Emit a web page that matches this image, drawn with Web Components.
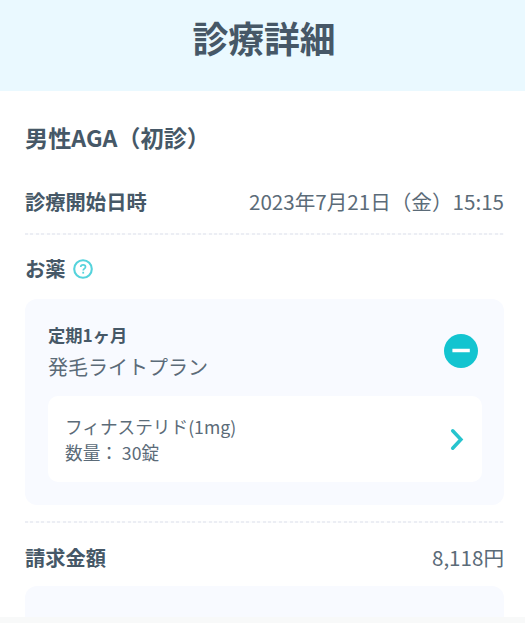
<!DOCTYPE html>
<html lang="ja">
<head>
<meta charset="utf-8">
<title>診療詳細</title>
<style>
  body {
    margin: 0;
    background: #fff;
    color: #465867;
    font-family: "Noto Sans CJK JP", sans-serif;
    overflow: hidden;
  }
</style>
</head>
<body>
<detail-page>
  <span slot="title">診療詳細</span>
  <span slot="course">男性AGA（初診）</span>
  <detail-row>
    <span slot="label">診療開始日時</span>
    2023年7月21日（金）15:15
  </detail-row>
  <dotted-line></dotted-line>
  <detail-row class="drug">
    <span slot="label">お薬</span>
    <help-icon slot="icon"></help-icon>
  </detail-row>
  <plan-card>
    <span slot="term">定期1ヶ月</span>
    <span slot="plan">発毛ライトプラン</span>
    <drug-item>
      <span slot="name">フィナステリド(1mg)</span>
      <span slot="amount">数量： 30錠</span>
    </drug-item>
  </plan-card>
  <dotted-line></dotted-line>
  <detail-row class="bill">
    <span slot="label">請求金額</span>
    8,118円
  </detail-row>
  <bill-panel></bill-panel>
</detail-page>

<script>
class BaseElement extends HTMLElement {
  constructor() {
    super();
    const template = document.createElement("template");
    template.innerHTML = this.constructor.markup;
    this.attachShadow({ mode: "open" });
    this.shadowRoot.appendChild(template.content.cloneNode(true));
  }
}

class DetailPage extends BaseElement {
  static markup = `
    <style>
      :host {
        display: flex;
        flex-direction: column;
        height: 623px;
        overflow: hidden;
      }
      header {
        height: 91px;
        flex: none;
        box-sizing: border-box;
        padding: 11px 0 0 3px;
        background: #eaf9ff;
        text-align: center;
        font-size: 35.8px;
        line-height: 52px;
        font-weight: 700;
      }
      main {
        flex: 1;
        min-height: 0;
        overflow: hidden;
        padding: 29px 21px 0 25px;
      }
      h1 {
        margin: 0 0 32px;
        font-size: 23.2px;
        line-height: 34px;
        font-weight: 700;
      }
      footer {
        flex: none;
        height: 6px;
        background: #f8f9f9;
      }
    </style>
    <header><slot name="title"></slot></header>
    <main>
      <h1><slot name="course"></slot></h1>
      <slot></slot>
    </main>
    <footer></footer>`;
}

class DetailRow extends BaseElement {
  static markup = `
    <style>
      :host {
        display: flex;
        align-items: center;
        height: 30px;
        font-size: 20.3px;
        line-height: 30px;
        white-space: nowrap;
      }
      :host(.drug) { padding-top: 18px; }
      :host(.bill) { padding-top: 19px; }
      .label { font-weight: 700; }
      .icon { display: flex; margin-left: 7px; }
      .value { margin-left: auto; font-size: 20.6px; color: #5b6b78; }
    </style>
    <div class="label"><slot name="label"></slot></div>
    <div class="icon"><slot name="icon"></slot></div>
    <div class="value"><slot></slot></div>`;
}

class HelpIcon extends BaseElement {
  static markup = `
    <style>
      :host { display: block; width: 20px; height: 20px; padding-top: 1px; }
      svg { display: block; }
    </style>
    <svg width="20" height="20" viewBox="0 0 20 20" fill="none" stroke="#55d3dc">
      <circle cx="10" cy="10" r="8.8" stroke-width="2.1"/>
      <path d="M7.7 8.1c0-1.4 1-2.2 2.4-2.2s2.4.8 2.4 2c0 1.7-2.3 1.8-2.3 3.6" stroke-width="1.7"/>
      <path d="M10.2 12.8v1.8" stroke-width="1.8"/>
    </svg>`;
}

class DottedLine extends BaseElement {
  static markup = `
    <style>
      :host {
        display: block;
        height: 2px;
        margin-top: 17px;
        background: repeating-linear-gradient(90deg, #eceef4 0 3px, #fbfcfd 3px 5.4px);
      }
      :host(:not(:first-of-type)) { margin-top: 16px; }
    </style>`;
}

class PlanCard extends BaseElement {
  static markup = `
    <style>
      :host {
        display: block;
        box-sizing: border-box;
        height: 206px;
        margin-top: 16px;
        padding: 23px 22px 0 23px;
        border-radius: 12px;
        background: #f8faff;
      }
      .head {
        display: flex;
        align-items: center;
        justify-content: space-between;
        height: 58px;
        margin-bottom: 16px;
        padding-right: 4px;
      }
      .text { padding-top: 5px; }
      .term { font-size: 17.3px; line-height: 26px; font-weight: 700; }
      .plan { font-size: 20px; line-height: 37px; color: #5b6b78; }
    </style>
    <div class="head">
      <div class="text">
        <div class="term"><slot name="term"></slot></div>
        <div class="plan"><slot name="plan"></slot></div>
      </div>
      <svg width="34" height="34" viewBox="0 0 34 34">
        <circle cx="17" cy="17" r="17" fill="#13c4d0"/>
        <path d="M8.4 16.5h17.4" stroke="#fff" stroke-width="3.5"/>
      </svg>
    </div>
    <slot></slot>`;
}

class DrugItem extends BaseElement {
  static markup = `
    <style>
      :host {
        display: flex;
        align-items: center;
        justify-content: space-between;
        box-sizing: border-box;
        height: 86px;
        padding: 1px 17px 0;
        border-radius: 10px;
        background: #fff;
        color: #5b6b78;
        font-size: 17.65px;
        line-height: 26px;
      }
      .text { white-space: nowrap; }
    </style>
    <div class="text">
      <div><slot name="name"></slot></div>
      <div><slot name="amount"></slot></div>
    </div>
    <svg width="15" height="24" viewBox="0 0 15 24">
      <path d="M2.7 2.8l8.2 8.7-8.2 8.7" fill="none" stroke="#27c4ce" stroke-width="3.5" stroke-linecap="round"/>
    </svg>`;
}

class BillPanel extends BaseElement {
  static markup = `
    <style>
      :host {
        display: block;
        height: 60px;
        margin-top: 14px;
        border-radius: 12px;
        background: #f8faff;
      }
    </style>`;
}

customElements.define("detail-page", DetailPage);
customElements.define("detail-row", DetailRow);
customElements.define("help-icon", HelpIcon);
customElements.define("dotted-line", DottedLine);
customElements.define("plan-card", PlanCard);
customElements.define("drug-item", DrugItem);
customElements.define("bill-panel", BillPanel);
</script>
</body>
</html>
